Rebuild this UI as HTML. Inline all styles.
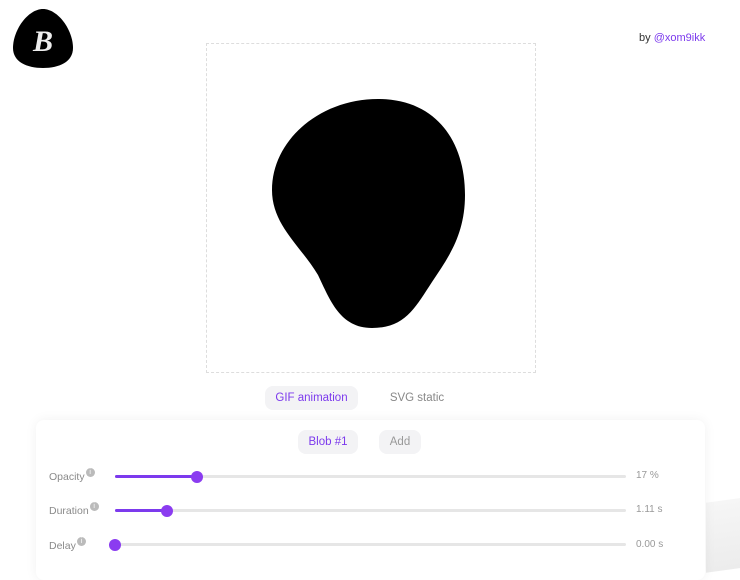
<!DOCTYPE html>
<html><head><meta charset="utf-8"><style>
body{margin:0;width:740px;height:561px;overflow:hidden;background:#fff;font-family:"Liberation Sans",sans-serif;position:relative}
.abs{position:absolute}
.btn{position:absolute;height:24px;line-height:24px;border-radius:8px;font-size:11.5px;text-align:center}
.lbl{position:absolute;left:49px;font-size:10.5px;color:#8a8a8a}
.lbl i{display:inline-block;width:9px;height:9px;border-radius:50%;background:#bbb;color:#fff;font-size:7px;line-height:9px;text-align:center;font-style:normal;vertical-align:6px;margin-left:1px}
.track{position:absolute;left:115px;width:511px;height:3px;background:#e6e6e6;border-radius:2px}
.fill{position:absolute;left:0;top:0;height:3px;background:#7c3aed;border-radius:2px}
.thumb{position:absolute;top:-4.5px;width:12px;height:12px;border-radius:50%;background:#8b3cf0}
.val{position:absolute;left:636px;font-size:10px;color:#999}
</style></head><body>
<svg class="abs" style="left:12px;top:6px" width="62" height="62" viewBox="0 0 62 62"><path d="M31,3 C46,3 61,24 61,42 C61,56 47,62 31,62 C15,62 1,56 1,42 C1,24 16,3 31,3Z" fill="#000"/><text x="31" y="45" font-family="Liberation Serif,serif" font-style="italic" font-weight="bold" font-size="30" fill="#eee" text-anchor="middle">B</text></svg>
<div class="abs" style="left:639px;top:32px;font-size:11px;color:#333">by <span style="color:#7c3aed">@xom9ikk</span></div>
<div class="abs" style="left:206px;top:43px;width:328px;height:328px;border:1px dashed #ddd"></div>
<svg class="abs" style="left:0;top:0" width="740" height="400"><path d="M378,99 C435,99 465,140 465,195 C465,235 448,258 432,282 C415,308 405,328 372,328 C340,328 330,300 318,275 C300,245 272,225 272,190 C272,140 320,99 378,99Z" fill="#000"/></svg>
<div class="btn" style="left:265px;top:386px;width:93px;background:#f3f3f5;color:#7c3aed">GIF animation</div>
<div class="btn" style="left:378px;top:386px;width:78px;color:#888">SVG static</div>
<div class="abs" style="left:706px;top:500px;width:40px;height:70px;background:linear-gradient(#f6f6f6,#ececec);transform:skewY(-8deg)"></div>
<div class="abs" style="left:36px;top:420px;width:669px;height:160px;background:#fff;box-shadow:0 0 12px rgba(0,0,0,0.06);border-radius:8px"></div>
<div class="btn" style="left:298px;top:430px;width:60px;background:#f3f3f5;color:#7c3aed">Blob #1</div>
<div class="btn" style="left:379px;top:430px;width:42px;background:#f3f3f5;color:#999">Add</div>
<div class="lbl" style="top:468px">Opacity<i>i</i></div>
<div class="track" style="top:475px"><div class="fill" style="width:82px"></div><div class="thumb" style="left:76px"></div></div>
<div class="val" style="top:470px">17 %</div>
<div class="lbl" style="top:502px">Duration<i>i</i></div>
<div class="track" style="top:509px"><div class="fill" style="width:52px"></div><div class="thumb" style="left:46px"></div></div>
<div class="val" style="top:504px">1.11 s</div>
<div class="lbl" style="top:537px">Delay<i>i</i></div>
<div class="track" style="top:543px"><div class="thumb" style="left:-6px"></div></div>
<div class="val" style="top:539px">0.00 s</div>
</body></html>
